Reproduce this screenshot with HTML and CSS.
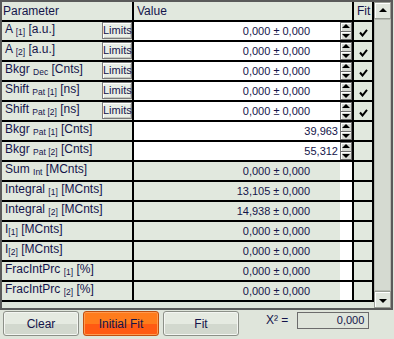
FILE: index.html
```html
<!DOCTYPE html>
<html lang="en">

<head>
    <meta charset="UTF-8">
    <title>Fit Parameters</title>
    <link rel="stylesheet" href="styles.css">
</head>

<body>
    <div class="frame">
        <div class="grid">
            <div class="cell hd">Parameter</div>
            <div class="cell hd hd-value">Value</div>
            <div class="cell hd hd-fit">Fit</div>

            <div class="cell param"><span class="lbl">A <span class="sub">[1]</span> [a.u.]</span><button class="limits">Limits</button></div>
            <div class="cell value edit"><span class="num pm">0,000 ± 0,000</span><span class="spin"><i class="up"></i><i class="dn"></i></span></div>
            <div class="cell fit"><svg class="check" width="9" height="8" viewBox="0 0 9 8"><path d="M1 3.5 L3.5 6.5 L8 0.8" /></svg></div>

            <div class="cell param"><span class="lbl">A <span class="sub">[2]</span> [a.u.]</span><button class="limits">Limits</button></div>
            <div class="cell value edit"><span class="num pm">0,000 ± 0,000</span><span class="spin"><i class="up"></i><i class="dn"></i></span></div>
            <div class="cell fit"><svg class="check" width="9" height="8" viewBox="0 0 9 8"><path d="M1 3.5 L3.5 6.5 L8 0.8" /></svg></div>

            <div class="cell param"><span class="lbl">Bkgr <span class="sub">Dec</span> [Cnts]</span><button class="limits">Limits</button></div>
            <div class="cell value edit"><span class="num pm">0,000 ± 0,000</span><span class="spin"><i class="up"></i><i class="dn"></i></span></div>
            <div class="cell fit"><svg class="check" width="9" height="8" viewBox="0 0 9 8"><path d="M1 3.5 L3.5 6.5 L8 0.8" /></svg></div>

            <div class="cell param"><span class="lbl">Shift <span class="sub">Pat [1]</span> [ns]</span><button class="limits">Limits</button></div>
            <div class="cell value edit"><span class="num pm">0,000 ± 0,000</span><span class="spin"><i class="up"></i><i class="dn"></i></span></div>
            <div class="cell fit"><svg class="check" width="9" height="8" viewBox="0 0 9 8"><path d="M1 3.5 L3.5 6.5 L8 0.8" /></svg></div>

            <div class="cell param"><span class="lbl">Shift <span class="sub">Pat [2]</span> [ns]</span><button class="limits">Limits</button></div>
            <div class="cell value edit"><span class="num pm">0,000 ± 0,000</span><span class="spin"><i class="up"></i><i class="dn"></i></span></div>
            <div class="cell fit"><svg class="check" width="9" height="8" viewBox="0 0 9 8"><path d="M1 3.5 L3.5 6.5 L8 0.8" /></svg></div>

            <div class="cell param"><span class="lbl">Bkgr <span class="sub">Pat [1]</span> [Cnts]</span></div>
            <div class="cell value edit"><span class="num">39,963</span><span class="spin"><i class="up"></i><i class="dn"></i></span></div>
            <div class="cell fit"></div>

            <div class="cell param"><span class="lbl">Bkgr <span class="sub">Pat [2]</span> [Cnts]</span></div>
            <div class="cell value edit"><span class="num">55,312</span><span class="spin"><i class="up"></i><i class="dn"></i></span></div>
            <div class="cell fit"></div>

            <div class="cell param"><span class="lbl">Sum <span class="sub">Int</span> [MCnts]</span></div>
            <div class="cell value"><span class="num pm">0,000 ± 0,000</span><span class="blank"></span></div>
            <div class="cell fit"></div>

            <div class="cell param"><span class="lbl">Integral <span class="sub">[1]</span> [MCnts]</span></div>
            <div class="cell value"><span class="num pm">13,105 ± 0,000</span><span class="blank"></span></div>
            <div class="cell fit"></div>

            <div class="cell param"><span class="lbl">Integral <span class="sub">[2]</span> [MCnts]</span></div>
            <div class="cell value"><span class="num pm">14,938 ± 0,000</span><span class="blank"></span></div>
            <div class="cell fit"></div>

            <div class="cell param"><span class="lbl">I<span class="sub">[1]</span> [MCnts]</span></div>
            <div class="cell value"><span class="num pm">0,000 ± 0,000</span><span class="blank"></span></div>
            <div class="cell fit"></div>

            <div class="cell param"><span class="lbl">I<span class="sub">[2]</span> [MCnts]</span></div>
            <div class="cell value"><span class="num pm">0,000 ± 0,000</span><span class="blank"></span></div>
            <div class="cell fit"></div>

            <div class="cell param"><span class="lbl">FracIntPrc <span class="sub">[1]</span> [%]</span></div>
            <div class="cell value"><span class="num pm">0,000 ± 0,000</span><span class="blank"></span></div>
            <div class="cell fit"></div>

            <div class="cell param"><span class="lbl">FracIntPrc <span class="sub">[2]</span> [%]</span></div>
            <div class="cell value"><span class="num pm">0,000 ± 0,000</span><span class="blank"></span></div>
            <div class="cell fit"></div>
        </div>
        <div class="scrollbar">
            <div class="sb-btn"><i class="up"></i></div>
            <div class="sb-thumb"></div>
            <div class="sb-btn"><i class="dn"></i></div>
        </div>
    </div>

    <div class="footer">
        <button class="btn">Clear</button>
        <button class="btn btn-orange">Initial Fit</button>
        <button class="btn">Fit</button>
        <span class="chi">X² =</span>
        <span class="chi-box">0,000</span>
    </div>
</body>

</html>
```

FILE: styles.css
```css
body {
    margin: 0;
    padding: 0;
    background-color: #dfe5db;
    font-family: 'Liberation Sans', Arial, sans-serif;
    font-size: 12px;
    color: #14144a;
}

.frame {
    display: flex;
    width: 389px;
    height: 306px;
    border: 2px solid #5a5a5a;
    background-color: #dfe5db;
}

.grid {
    display: grid;
    grid-template-columns: 130px 218px 18px;
    grid-auto-rows: 18px;
    gap: 2px;
    align-self: flex-start;
    background-color: #000;
    border-right: 2px solid #000;
    border-bottom: 2px solid #000;
}

.cell {
    background-color: #e1e8de;
    overflow: hidden;
}

.hd {
    line-height: 18px;
    padding-left: 1px;
}

.hd-value {
    padding-left: 3px;
}

.hd-fit {
    padding-left: 3px;
}

.param {
    display: flex;
    align-items: flex-start;
    justify-content: space-between;
}

.lbl {
    line-height: 15px;
    padding-left: 3px;
    white-space: nowrap;
}

.sub {
    font-size: 8.5px;
    position: relative;
    top: 2px;
}

.limits {
    width: 30px;
    height: 17px;
    margin: 0;
    padding: 0;
    border: 1px solid #7c7c7c;
    box-shadow: inset 1px 1px 0 #fff, inset -1px -1px 0 #c4c8c0;
    background-color: #e9eee6;
    font-family: 'Liberation Sans', Arial, sans-serif;
    font-size: 11px;
    color: #14144a;
    line-height: 15px;
}

.value {
    display: flex;
}

.value.edit {
    background-color: #fff;
}

.num {
    flex: 1;
    text-align: right;
    font-size: 11px;
    line-height: 18px;
    padding-right: 2px;
}

.num.pm {
    padding-right: 30px;
}

.blank {
    width: 12px;
    background-color: #fff;
}

.spin {
    width: 12px;
    display: flex;
    flex-direction: column;
}

.spin i,
.sb-btn {
    position: relative;
    flex: 1;
    background-color: #d6d8d2;
    border: 1px solid #6c6c6c;
    box-shadow: inset 1px 1px 0 #fff;
}

.spin i + i {
    border-top: none;
}

.up::before,
.dn::before {
    content: "";
    position: absolute;
    left: 50%;
    top: 50%;
    margin-left: -4px;
    border-left: 4px solid transparent;
    border-right: 4px solid transparent;
}

.up::before {
    margin-top: -3px;
    border-bottom: 4px solid #000;
}

.dn::before {
    margin-top: -1px;
    border-top: 4px solid #000;
}

.fit {
    display: flex;
    justify-content: center;
    padding-top: 7px;
}

.check path {
    fill: none;
    stroke: #000;
    stroke-width: 2;
}

.scrollbar {
    width: 17px;
    display: flex;
    flex-direction: column;
}

.sb-btn {
    flex: 0 0 15px;
    background-color: #e1e6de;
    border-color: #9a9e96;
}

.sb-thumb {
    flex: 1;
    background-color: #d5dad1;
    border: 1px solid #b8bcb4;
}

.footer {
    display: flex;
    align-items: flex-start;
    gap: 4px;
    padding: 1px 0 0 3px;
}

.btn {
    width: 76px;
    height: 25px;
    margin: 0;
    border: 1px solid #8c9088;
    border-radius: 3px;
    background: linear-gradient(#e5eae1 0%, #e5eae1 50%, #d2d8ce 50%, #d2d8ce 100%);
    box-shadow: inset 0 0 0 1px #f4f6f2;
    font-family: 'Liberation Sans', Arial, sans-serif;
    font-size: 12px;
    color: #14144a;
}

.btn-orange {
    border-color: #c05010;
    background: linear-gradient(#ff7c1c 0%, #ff7c1c 50%, #ff5a12 50%, #ff5a12 100%);
    box-shadow: inset 0 0 0 1px #ff9a50;
}

.chi {
    margin: 1px 0 0 23px;
    line-height: 17px;
}

.chi-box {
    width: 66px;
    height: 15px;
    margin: 1px 0 0 5px;
    padding-right: 4px;
    border: 1px solid #6c6c6c;
    text-align: right;
    font-size: 11px;
    line-height: 15px;
}
```
